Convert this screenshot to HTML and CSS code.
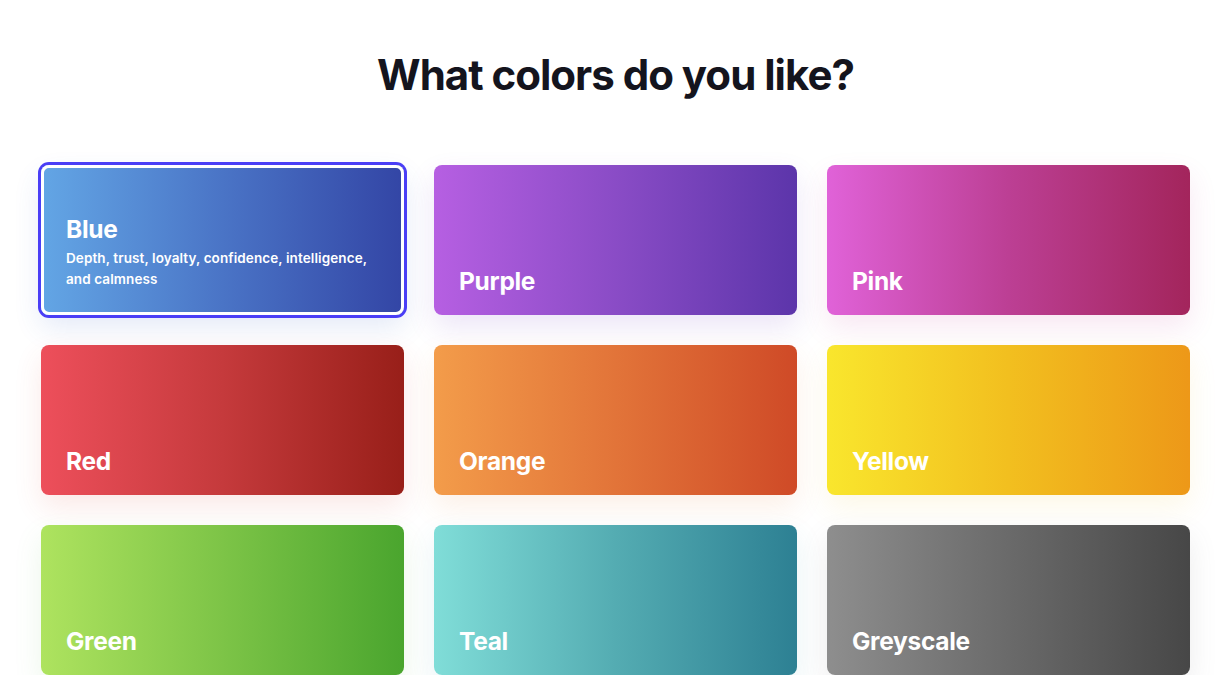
FILE: index.html
```html
<!DOCTYPE html>
<html lang="en">
<head>
<meta charset="utf-8">
<title>What colors do you like?</title>
<link rel="stylesheet" href="styles.css">
</head>
<body>
<main class="page">
  <h1 class="title">What colors do you like?</h1>
  <div class="grid">
    <div class="card card-blue is-selected">
      <div class="card-name">Blue</div>
      <div class="card-desc">Depth, trust, loyalty, confidence, intelligence, and calmness</div>
    </div>
    <div class="card card-purple"><div class="card-name">Purple</div></div>
    <div class="card card-pink"><div class="card-name">Pink</div></div>
    <div class="card card-red"><div class="card-name">Red</div></div>
    <div class="card card-orange"><div class="card-name">Orange</div></div>
    <div class="card card-yellow"><div class="card-name">Yellow</div></div>
    <div class="card card-green"><div class="card-name">Green</div></div>
    <div class="card card-teal"><div class="card-name">Teal</div></div>
    <div class="card card-grey"><div class="card-name">Greyscale</div></div>
  </div>
</main>
</body>
</html>
```

FILE: styles.css
```css
html, body {
  margin: 0;
  padding: 0;
  background: #ffffff;
}

body {
  font-family: Inter, "Noto Sans", "DejaVu Sans", sans-serif;
  color: #15151f;
}

.page {
  width: 1149px;
  margin: 0 auto;
  padding-top: 47px;
}

.title {
  margin: 0 0 62px;
  text-align: center;
  font-size: 42px;
  line-height: 56px;
  font-weight: 700;
  letter-spacing: -1px;
  color: #14141d;
}

.grid {
  display: grid;
  grid-template-columns: repeat(3, 363px);
  grid-auto-rows: 150px;
  gap: 30px;
}

.card {
  border-radius: 8px;
  padding: 0 25px 18px;
  display: flex;
  flex-direction: column;
  justify-content: flex-end;
  color: #ffffff;
}

.card-name {
  font-size: 24.5px;
  line-height: 32px;
  font-weight: 700;
  letter-spacing: -0.3px;
}

.card-desc {
  font-size: 13.5px;
  line-height: 21px;
  font-weight: 600;
  letter-spacing: 0.1px;
}

.card-blue {
  padding-bottom: 25px;
  background: linear-gradient(90deg, #63a6e5 0%, #4a74c6 50%, #3345a5 100%);
}

.card-blue .card-name {
  margin-bottom: 3px;
}

.is-selected {
  box-shadow: 0 0 0 3px #4a3ef6, inset 0 0 0 3px #ffffff, 0 12px 28px rgba(60, 100, 200, 0.14);
}

.card-purple {
  background: linear-gradient(90deg, #b65fe2 0%, #8a4cc6 50%, #5c35aa 100%);
  box-shadow: 0 12px 28px rgba(120, 70, 200, 0.14);
}

.card-pink {
  background: linear-gradient(90deg, #e062d8 0%, #bc3f94 50%, #a3255c 100%);
  box-shadow: 0 12px 28px rgba(200, 60, 150, 0.12);
}

.card-red {
  background: linear-gradient(90deg, #ed4f5b 0%, #c53a3c 50%, #981f19 100%);
  box-shadow: 0 12px 28px rgba(220, 70, 60, 0.12);
}

.card-orange {
  background: linear-gradient(90deg, #f39c4a 0%, #e27439 50%, #cf4a27 100%);
  box-shadow: 0 12px 28px rgba(230, 130, 60, 0.12);
}

.card-yellow {
  background: linear-gradient(90deg, #f9e62d 0%, #f2bf1f 50%, #ed9818 100%);
  box-shadow: 0 12px 28px rgba(240, 200, 60, 0.12);
}

.card-green {
  background: linear-gradient(90deg, #aee35f 0%, #7dc447 50%, #4aa52e 100%);
  box-shadow: 0 12px 28px rgba(100, 190, 80, 0.12);
}

.card-teal {
  background: linear-gradient(90deg, #80ddd8 0%, #54acb2 50%, #2d8093 100%);
  box-shadow: 0 12px 28px rgba(60, 160, 170, 0.12);
}

.card-grey {
  background: linear-gradient(90deg, #8e8e8e 0%, #6a6a6a 50%, #474747 100%);
  box-shadow: 0 12px 28px rgba(100, 100, 110, 0.12);
}
```
